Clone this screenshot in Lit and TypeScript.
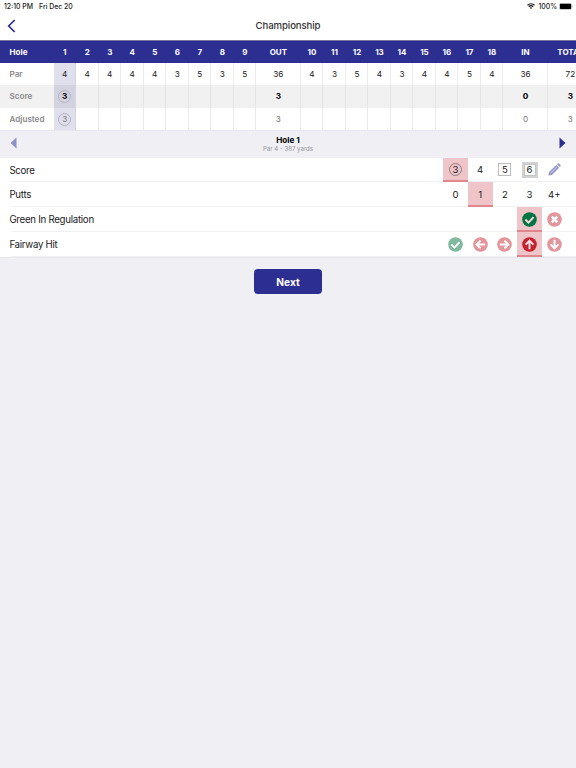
import { LitElement, html, css, svg, nothing, TemplateResult } from "lit";
import { customElement, property } from "lit/decorators.js";
import { classMap } from "lit/directives/class-map.js";

interface Column {
  label: string;
  par: number;
  score?: number;
  active?: boolean;
}

const hole = (n: number, par: number): Column => ({ label: String(n), par });

const COLUMNS: Column[] = [
  { label: "1", par: 4, score: 3, active: true },
  ...[4, 4, 4, 4, 3, 5, 3, 5].map((p, i) => hole(i + 2, p)),
  { label: "OUT", par: 36, score: 3 },
  ...[4, 3, 5, 4, 3, 4, 4, 5, 4].map((p, i) => hole(i + 10, p)),
  { label: "IN", par: 36, score: 0 },
  { label: "TOTAL", par: 72, score: 3 },
];

const arrow = (angle: number) => svg`
  <g transform="rotate(${angle} 7.5 7.5)">
    <path d="M7.5 12.2V3.8M3.6 7.6L7.5 3.7L11.4 7.6" />
  </g>`;

const GLYPHS: Record<string, TemplateResult> = {
  check: svg`<path d="M3.4 7.5L6.5 10.6L11.6 5.1" />`,
  cross: svg`<path stroke-width="2.6" d="M4.7 4.7L10.3 10.3M10.3 4.7L4.7 10.3" />`,
  left: arrow(-90),
  right: arrow(90),
  up: arrow(0),
  down: arrow(180),
};

@customElement("status-bar")
export class StatusBar extends LitElement {
  static styles = css`
    :host {
      display: flex;
      height: 12px;
      align-items: center;
      padding: 0 3px 0 4px;
      font-size: 6.9px;
      font-weight: 500;
      color: #222;
    }
    .date { margin-left: 6px; flex: 1; }
    .wifi { width: 8px; height: 6px; margin-right: 3px; }
    .battery { width: 14px; height: 7px; margin-left: 2px; }
  `;
  render() {
    return html`
      <span>12:10 PM</span><span class="date">Fri Dec 20</span>
      <svg class="wifi" viewBox="0 0 8 6" fill="none" stroke="#111" stroke-width="1.2">
        <path d="M0.5 2.2C2.5 0.3 5.5 0.3 7.5 2.2M1.8 3.7C3.1 2.5 4.9 2.5 6.2 3.7" />
        <path d="M4 5.9L2.8 4.8C3.4 4.1 4.6 4.1 5.2 4.8Z" fill="#111" stroke="none" />
      </svg>
      <span>100%</span>
      <svg class="battery" viewBox="0 0 14 7">
        <rect x="0.3" y="0.3" width="12.4" height="6.2" rx="1.5" fill="none" stroke="#999" stroke-width="0.5" />
        <rect x="0.9" y="0.8" width="11.2" height="5.2" rx="0.9" fill="#000" />
        <path d="M13.1 2.5Q13.9 3.4 13.1 4.4Z" fill="#888" />
      </svg>
    `;
  }
}

@customElement("score-card")
export class ScoreCard extends LitElement {
  static styles = css`
    :host { display: block; overflow: hidden; border-bottom: 1px solid #e6e6ee; }
    .row {
      display: grid;
      grid-template-columns: 53.5px repeat(9, 22.5px) 44.7px repeat(9, 22.5px) 44.7px 45px;
      height: 22.3px;
      font-size: 8.2px;
      color: #222;
      background: #fff;
    }
    .row > * { display: flex; align-items: center; justify-content: center; }
    .row > .name { justify-content: flex-start; padding-left: 9.5px; font-weight: 600; font-size: 8.1px; color: #88888a; }
    .cell { box-shadow: inset -1px 0 #ebebec; }
    .head { height: 23px; box-sizing: border-box; background: #2d2e91; color: #fff; font-size: 8px; font-weight: 700; border-top: 1px solid #77779f; }
    .head > .name { color: #fff; font-weight: 700; }
    .head .cell { box-shadow: none; }
    .score { background: #f1f1f1; color: #000; font-weight: 700; }
    .score .cell { box-shadow: inset -1px 0 #e4e4e5; }
    .adjusted { color: #777; }
    .adjusted > * { padding-top: 1px; }
    .active { background: #e0dfee; }
    .row:not(.head) .active { box-shadow: inset -1px 0 #d5d4e5; }
    .head .active { background: none; }
    .score .active { background: #d3d2e1; }
    .ring {
      display: flex; align-items: center; justify-content: center;
      box-sizing: border-box; width: 13px; height: 13px;
      border: 1px solid #b2b1bf; border-radius: 50%;
    }
  `;
  private row(kind: string, name: string, value: (c: Column) => unknown) {
    return html`<div class="row ${kind}">
      <span class="name">${name}</span>
      ${COLUMNS.map((c) => html`<span class=${classMap({ cell: true, active: !!c.active })}>${value(c)}</span>`)}
    </div>`;
  }
  private score(c: Column) {
    if (c.score === undefined) return nothing;
    return c.active ? html`<span class="ring">${c.score}</span>` : c.score;
  }
  render() {
    return html`
      ${this.row("head", "Hole", (c) => c.label)}
      ${this.row("par", "Par", (c) => c.par)}
      ${this.row("score", "Score", this.score)}
      ${this.row("adjusted", "Adjusted", this.score)}
    `;
  }
}

interface Choice {
  text?: string;
  frame?: string;
  glyph?: string;
  good?: boolean;
  pencil?: boolean;
  selected?: boolean;
}

@customElement("choice-row")
export class ChoiceRow extends LitElement {
  @property() label = "";
  @property({ attribute: false }) choices: Choice[] = [];
  static styles = css`
    :host {
      display: flex; height: 24.8px; padding: 0 9.4px;
      background: linear-gradient(#f1f1f3, #f1f1f3) 11px 100% / 100% 1px no-repeat #fff;
      font-size: 9.6px; color: #1b1b1b;
    }
    .label { flex: 1; line-height: 25.6px; font-size: 9.7px; letter-spacing: -0.28px; }
    .choice {
      display: flex; align-items: center; justify-content: center;
      box-sizing: border-box; width: 24.7px; height: 24.8px;
      border-bottom: 2px solid transparent; padding-top: 1.4px;
    }
    .selected { background: #efc5ca; border-bottom-color: #df868e; }
    .frame {
      display: flex; align-items: center; justify-content: center;
      box-sizing: border-box; width: 13px; height: 13px; border: 1px solid #bdbdbd;
    }
    .circle { border-color: #8f7c7f; border-radius: 50%; }
    .double { width: 16px; height: 16px; border: 2px solid #d2d2d2; outline: 1px solid #c4c4c4; outline-offset: -3px; }
    .icon { width: 15px; height: 15px; }
    .icon circle { fill: #e2959a; }
    .icon.good circle { fill: #7fb9a0; }
    .selected .icon circle { fill: #c3232f; }
    .selected .icon.good circle { fill: #007443; }
    .icon .mark { fill: none; stroke: #fff; stroke-width: 2; }
    .selected .mark { stroke: #f6dde0; }
    .pencil { width: 13px; height: 13px; }
  `;
  private content(c: Choice) {
    if (c.glyph)
      return html`<svg class=${classMap({ icon: true, good: !!c.good })} viewBox="0 0 15 15">
        <circle cx="7.5" cy="7.5" r="7.3" /><g class="mark">${GLYPHS[c.glyph]}</g>
      </svg>`;
    if (c.pencil)
      return html`<svg class="pencil" viewBox="0 0 13 13">
        <path d="M0.4 12.6L1.1 9.1L8.3 1.9L11.1 4.7L3.9 11.9Z" fill="#9697cc" />
        <path d="M9 1.3L9.8 0.5Q10.5 0 11.2 0.6L12.4 1.8Q13 2.5 12.5 3.2L11.7 4Z" fill="#9697cc" />
        <path d="M2.8 10L8.7 4.1" stroke="#dcdcef" stroke-width="0.9" />
      </svg>`;
    if (c.frame) return html`<span class="frame ${c.frame}">${c.text}</span>`;
    return c.text;
  }
  render() {
    return html`<span class="label">${this.label}</span>
      ${this.choices.map((c) => html`<span class=${classMap({ choice: true, selected: !!c.selected })}>${this.content(c)}</span>`)}`;
  }
}

@customElement("app-root")
export class AppRoot extends LitElement {
  static styles = css`
    :host {
      display: block; height: 768px; overflow: hidden;
      background: #efeff4; font-family: Inter, "Liberation Sans", sans-serif;
    }
    .top { background: #fff; height: 40px; }
    .title-bar { display: grid; grid-template-columns: 60px 1fr 60px; align-items: center; height: 27px; }
    .back { width: 9px; height: 14px; margin-left: 6.5px; }
    .title { text-align: center; font-size: 9.6px; font-weight: 500; letter-spacing: -0.1px; color: #333; }
    .nav { display: flex; align-items: center; justify-content: space-between; height: 25.2px; padding: 0 10px 1.5px; }
    .triangle { width: 7px; height: 12px; }
    .hole { text-align: center; padding-top: 2.4px; }
    .number { font-size: 8.2px; line-height: 9px; font-weight: 700; color: #000; }
    .detail { font-size: 6.1px; line-height: 8px; color: #939398; }
    .form { border-bottom: 1px solid #e8e8ed; }
    .next {
      display: block; width: 68px; height: 25px; margin: 11.2px auto 0; padding: 1px 0 0;
      border: 0; border-radius: 4px; background: #2d2e91; color: #fff;
      font: 700 10.2px Inter, sans-serif;
    }
  `;
  render() {
    return html`
      <div class="top">
        <status-bar></status-bar>
        <div class="title-bar">
          <svg class="back" viewBox="0 0 9 14"><path d="M7.7 1L1.7 7L7.7 13" fill="none" stroke="#2d2e91" stroke-width="1.7" /></svg>
          <span class="title">Championship</span>
        </div>
      </div>
      <score-card></score-card>
      <div class="nav">
        <svg class="triangle" viewBox="0 0 7 12"><path d="M6.5 0.5V11.5L0.5 6Z" fill="#8e8fc5" /></svg>
        <div class="hole">
          <div class="number">Hole 1</div>
          <div class="detail">Par 4 - 387 yards</div>
        </div>
        <svg class="triangle" viewBox="0 0 7 12"><path d="M0.5 0.5V11.5L6.5 6Z" fill="#2d2e91" /></svg>
      </div>
      <div class="form">
        <choice-row label="Score" .choices=${[
          { text: "3", frame: "circle", selected: true },
          { text: "4" },
          { text: "5", frame: "square" },
          { text: "6", frame: "double" },
          { pencil: true },
        ]}></choice-row>
        <choice-row label="Putts" .choices=${[
          { text: "0" }, { text: "1", selected: true }, { text: "2" }, { text: "3" }, { text: "4+" },
        ]}></choice-row>
        <choice-row label="Green In Regulation" .choices=${[
          { glyph: "check", good: true, selected: true }, { glyph: "cross" },
        ]}></choice-row>
        <choice-row label="Fairway Hit" .choices=${[
          { glyph: "check", good: true }, { glyph: "left" }, { glyph: "right" },
          { glyph: "up", selected: true }, { glyph: "down" },
        ]}></choice-row>
      </div>
      <button class="next">Next</button>
    `;
  }
}
